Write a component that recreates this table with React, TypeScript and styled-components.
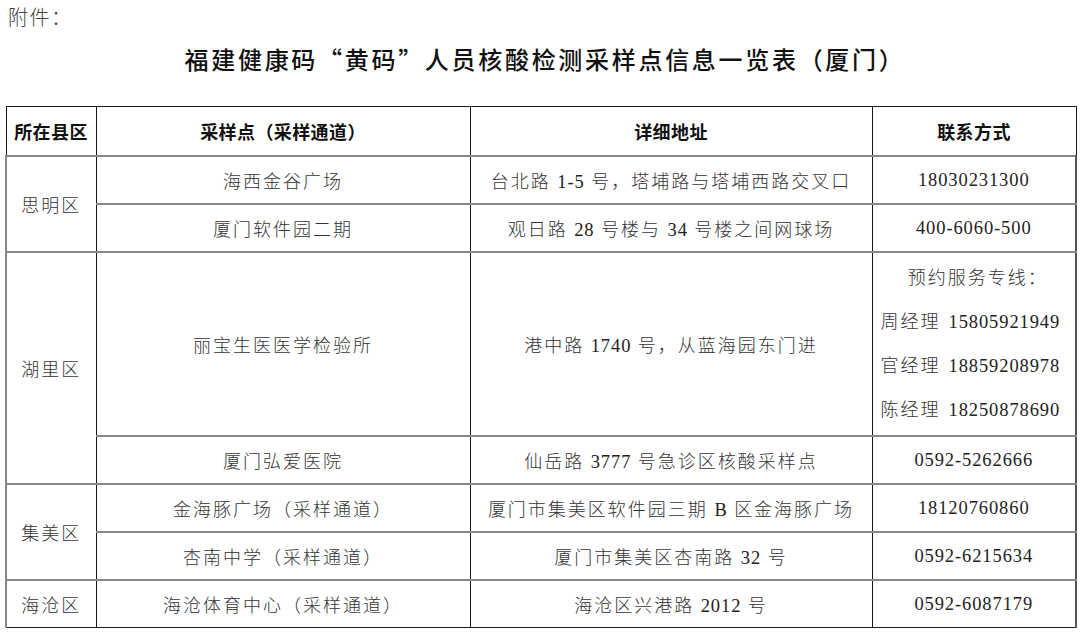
import React from "react";
import styled, { createGlobalStyle } from "styled-components";

const Global = createGlobalStyle`
  html, body { margin: 0; padding: 0; background: #fff; }
  body { font-family: "Liberation Serif", "Noto Sans CJK SC", serif; color: #333; }
`;

const Page = styled.div`
  width: 1080px;
  height: 637px;
  box-sizing: border-box;
  padding: 3px 5px 0 5px;
  overflow: hidden;
`;

const Attach = styled.div`
  font-family: "Noto Sans CJK SC", sans-serif;
  font-weight: 300;
  font-size: 20px;
  line-height: 28px;
  color: #444;
  padding-left: 3px;
  letter-spacing: 1.5px;
`;

const Title = styled.h1`
  margin: 10px 0 0 0;
  padding-left: 10px;
  text-align: center;
  font-family: "Noto Sans CJK SC", sans-serif;
  font-weight: 500;
  font-size: 24px;
  line-height: 36px;
  letter-spacing: 2.7px;
  color: #111;
`;

const Table = styled.table`
  margin-top: 29px;
  width: 1070px;
  border-collapse: collapse;
  table-layout: fixed;
  font-size: 18px;
  font-weight: 300;
  letter-spacing: 2px;
`;

const Th = styled.th`
  height: 48px;
  padding: 0;
  font-family: "Liberation Serif", "Noto Sans CJK SC", serif;
  font-weight: 700;
  font-size: 18px;
  color: #111;
  letter-spacing: 0.4px;
  border: 1px solid #1a1a1a;
  text-align: center;
  vertical-align: middle;
`;

const Td = styled.td<{ $h?: number; $last?: boolean }>`
  height: ${(p) => p.$h ?? 46}px;
  padding: 0;
  text-align: center;
  vertical-align: middle;
  color: #333;
  border-left: 1px solid #1a1a1a;
  border-right: 1px solid #1a1a1a;
  border-top: 2px solid #8a8a8a;
  border-bottom: ${(p) => (p.$last ? "1px solid #1a1a1a" : "2px solid #8a8a8a")};
`;

const FirstTd = styled(Td)`
  border-left: 2px solid #8a8a8a;
`;

const LastTd = styled(Td)`
  border-right: 2px solid #555;
`;

const Num = styled.span`
  font-family: "Liberation Serif", serif;
  font-weight: 400;
  font-size: 18.5px;
  letter-spacing: 0.9px;
  color: #222;
`;

const ContactList = styled.div`
  display: flex;
  flex-direction: column;
  align-items: flex-start;
  gap: 20px;
  padding-left: 8px;
  line-height: 24px;
`;

const ContactHead = styled.div`
  align-self: center;
`;

const Name = styled.span`
  margin-right: 8px;
`;

function T({ s }: { s: string }) {
  const parts = s.split(/([0-9A-Za-z\-]+)/);
  return (
    <>
      {parts.map((p, i) =>
        p === "" ? null : /^[0-9A-Za-z\-]+$/.test(p) ? <Num key={i}>{p}</Num> : <React.Fragment key={i}>{p}</React.Fragment>
      )}
    </>
  );
}

type Row = {
  district?: string;
  span?: number;
  site: string;
  addr: string;
  contact: React.ReactNode;
  h?: number;
};

const rows: Row[] = [
  { district: "思明区", span: 2, site: "海西金谷广场", addr: "台北路 1-5 号，塔埔路与塔埔西路交叉口", contact: <T s="18030231300" /> },
  { site: "厦门软件园二期", addr: "观日路 28 号楼与 34 号楼之间网球场", contact: <T s="400-6060-500" /> },
  {
    district: "湖里区",
    span: 2,
    site: "丽宝生医医学检验所",
    addr: "港中路 1740 号，从蓝海园东门进",
    h: 182,
    contact: (
      <ContactList>
        <ContactHead>预约服务专线：</ContactHead>
        <div><Name>周经理</Name><T s="15805921949" /></div>
        <div><Name>官经理</Name><T s="18859208978" /></div>
        <div><Name>陈经理</Name><T s="18250878690" /></div>
      </ContactList>
    ),
  },
  { site: "厦门弘爱医院", addr: "仙岳路 3777 号急诊区核酸采样点", contact: <T s="0592-5262666" /> },
  { district: "集美区", span: 2, site: "金海豚广场（采样通道）", addr: "厦门市集美区软件园三期 B 区金海豚广场", contact: <T s="18120760860" /> },
  { site: "杏南中学（采样通道）", addr: "厦门市集美区杏南路 32 号", contact: <T s="0592-6215634" /> },
  { district: "海沧区", span: 1, site: "海沧体育中心（采样通道）", addr: "海沧区兴港路 2012 号", contact: <T s="0592-6087179" /> },
];

export default function App() {
  return (
    <Page>
      <Global />
      <Attach>附件：</Attach>
      <Title>福建健康码“黄码”人员核酸检测采样点信息一览表（厦门）</Title>
      <Table>
        <colgroup>
          <col style={{ width: 90 }} />
          <col style={{ width: 374 }} />
          <col style={{ width: 402 }} />
          <col style={{ width: 204 }} />
        </colgroup>
        <thead>
          <tr>
            <Th>所在县区</Th>
            <Th>采样点（采样通道）</Th>
            <Th>详细地址</Th>
            <Th>联系方式</Th>
          </tr>
        </thead>
        <tbody>
          {rows.map((r, i) => {
            const last = i === rows.length - 1;
            return (
              <tr key={i}>
                {r.district && (
                  <FirstTd rowSpan={r.span} $last={last}>
                    {r.district}
                  </FirstTd>
                )}
                <Td $h={r.h} $last={last}><T s={r.site} /></Td>
                <Td $h={r.h} $last={last}><T s={r.addr} /></Td>
                <LastTd $h={r.h} $last={last}>{r.contact}</LastTd>
              </tr>
            );
          })}
        </tbody>
      </Table>
    </Page>
  );
}
